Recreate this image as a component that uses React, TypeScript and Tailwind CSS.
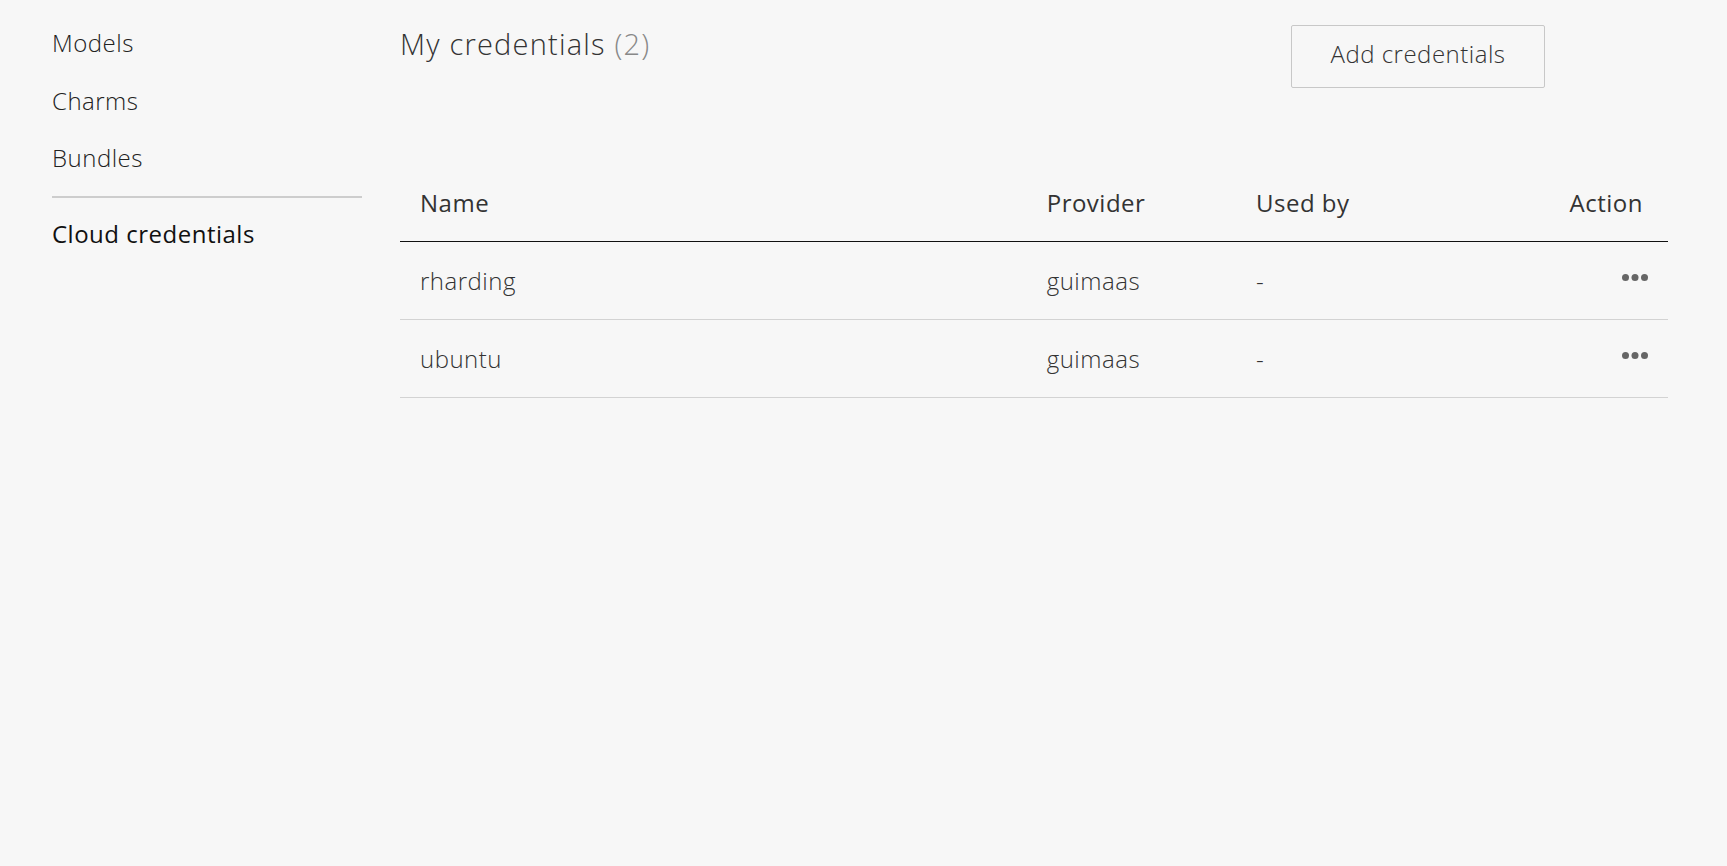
type Credential = { name: string; provider: string; usedBy: string };

const credentials: Credential[] = [
  { name: 'rharding', provider: 'guimaas', usedBy: '-' },
  { name: 'ubuntu', provider: 'guimaas', usedBy: '-' },
];

const navItems = ['Models', 'Charms', 'Bundles'];

// three grey dots of the row menu
function Dots() {
  return (
    <svg width="26" height="7" viewBox="0 0 26 7" className="-mt-[6px]">
      <circle cx="3.5" cy="3.5" r="3.5" fill="#666" />
      <circle cx="13" cy="3.5" r="3.5" fill="#666" />
      <circle cx="22.5" cy="3.5" r="3.5" fill="#666" />
    </svg>
  );
}

function Sidebar() {
  return (
    <aside className="w-[310px] shrink-0 pt-[25px]">
      <ul className="flex flex-col gap-[21.7px]">
        {navItems.map((item) => (
          <li key={item} className="text-[24px] leading-9 font-light text-[#222]">
            {item}
          </li>
        ))}
      </ul>
      <div className="mt-[20px] h-[1.5px] bg-[#cdcdcd]" />
      <div className="mt-[18.5px] text-[24px] leading-9 font-normal text-[#111]">Cloud credentials</div>
    </aside>
  );
}

function CredentialsTable() {
  const cols = 'grid grid-cols-[626.7px_209.3px_1fr_200px]';
  return (
    <div className="mt-[76px]">
      <div className={`${cols} h-[78px] items-center border-b-[1.5px] border-[#111] text-[24px] leading-9 text-[#333]`}>
        <div className="pl-5">Name</div>
        <div className="pl-5">Provider</div>
        <div className="pl-5">Used by</div>
        <div className="pr-[25px] text-right">Action</div>
      </div>
      {credentials.map((c) => (
        <div
          key={c.name}
          className={`${cols} h-[78px] items-center border-b-[1.5px] border-[#d3d3d3] text-[24px] leading-9 font-light text-[#333]`}
        >
          <div className="pl-5">{c.name}</div>
          <div className="pl-5">{c.provider}</div>
          <div className="pl-5">{c.usedBy}</div>
          <div className="flex justify-end pr-5">
            <Dots />
          </div>
        </div>
      ))}
    </div>
  );
}

export default function App() {
  return (
    <div
      className="flex min-h-[866px] w-full gap-[38px] bg-[#f7f7f7] pr-[59px] pl-[52px] tracking-[0.5px]"
      style={{ fontFamily: '"Open Sans", Lato, "Noto Sans", sans-serif' }}
    >
      <Sidebar />
      <main className="min-w-0 flex-1">
        <div className="flex items-start pt-[25px]">
          <h1 className="mt-[1px] text-[29px] leading-9 font-light tracking-[1.2px] text-[#333]">
            My credentials <span className="text-[#888]">(2)</span>
          </h1>
          <button className="mr-[123px] ml-auto flex h-[63px] w-[254px] items-center justify-center rounded-[2px] border-[1.5px] border-[#c8c8c8] pb-[5px] text-[24px] leading-9 font-light text-[#333]">
            Add credentials
          </button>
        </div>
        <CredentialsTable />
      </main>
    </div>
  );
}
